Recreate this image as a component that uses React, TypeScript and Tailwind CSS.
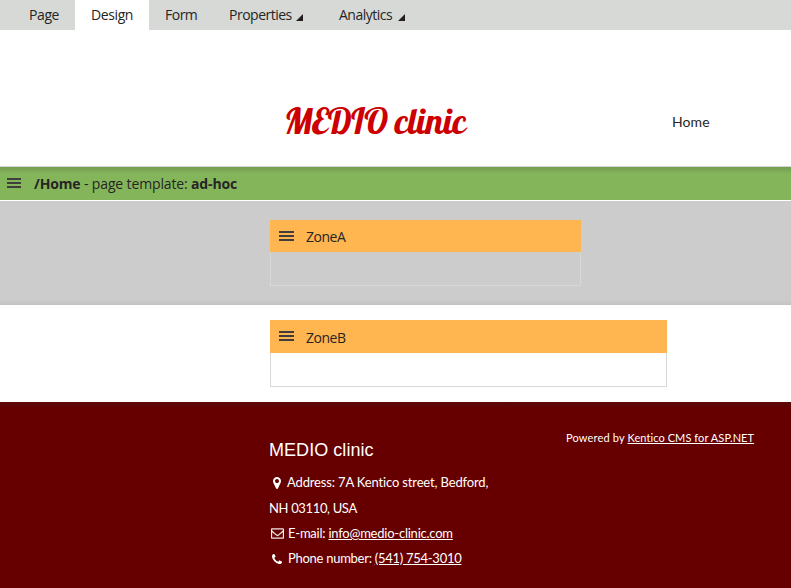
import type { ReactNode } from "react";

const UI = "font-['Open_Sans','Noto_Sans',sans-serif]";

function Caret() {
  return (
    <svg className="ml-[5px] mt-[4px] h-[7px] w-[7px]" viewBox="0 0 7 7">
      <path d="M7 0V7H0Z" fill="#231f20" />
    </svg>
  );
}

function MenuIcon({ className = "" }: { className?: string }) {
  return (
    <svg className={`shrink-0 ${className}`} width="15" height="10" viewBox="0 0 15 10" preserveAspectRatio="none" shapeRendering="crispEdges" fill="#403e3d">
      <rect width="15" height="2" />
      <rect y="4" width="15" height="2" />
      <rect y="8" width="15" height="2" />
    </svg>
  );
}

function Zone({ name, width, head, labelTop }: { name: string; width: string; head: string; labelTop: string }) {
  return (
    <div className={`ml-[270px] ${width}`}>
      <div className={`flex items-start bg-[#ffb550] pl-[9px] ${head}`}>
        <MenuIcon className="mt-[11px]" />
        <span className={`ml-[12px] text-[14px] leading-[18px] tracking-[-0.5px] ${labelTop}`}>{name}</span>
      </div>
      <div className="h-[34px] border border-t-0 border-[#d6d9d6]" />
    </div>
  );
}

function ContactIcon({ children, viewBox, className }: { children: ReactNode; viewBox: string; className: string }) {
  return (
    <svg className={`shrink-0 ${className}`} viewBox={viewBox} fill="currentColor">
      {children}
    </svg>
  );
}

export default function App() {
  return (
    <div className={`h-[588px] w-[791px] overflow-hidden bg-white text-[#262524] ${UI}`}>
      <nav className="flex h-[30px] bg-[#d6d9d6] text-[14px] leading-[30px] tracking-[-0.5px]">
        <div className="w-[75px] pl-[29px] tracking-[-0.4px]">Page</div>
        <div className="w-[74px] bg-white pl-[16px] tracking-[-0.4px]">Design</div>
        <div className="w-[80px] pl-[16px]">Form</div>
        <div className="flex w-[110px] items-center">
          <span className="w-[62px]">Properties</span>
          <Caret />
        </div>
        <div className="flex items-center">
          <span className="w-[54px]">Analytics</span>
          <Caret />
        </div>
      </nav>

      <header className="flex h-[136px] items-start">
        <h1 className="ml-[284px] mt-[66px] w-[196px] whitespace-nowrap font-['Lobster',cursive] text-[36px] font-normal leading-[50px] tracking-[-0.55px] text-[#cc0000]">MEDIO clinic</h1>
        <a className="ml-[192px] mt-[82px] font-['Lato',sans-serif] text-[14px] leading-[20px] tracking-[0.1px]">Home</a>
      </header>

      <div className="flex h-[35px] items-start border-b border-t border-b-white border-t-[#d5d5dc] bg-[#84b55b] bg-[linear-gradient(#739d50,#84b55b_7px)] pl-[7px]">
        <MenuIcon className="mt-[11px] w-[14px]" />
        <div className="ml-[13px] mt-[8px] whitespace-pre text-[14px] leading-[18px] tracking-[-0.14px]">
          <b>/Home</b> - page template: <b>ad-hoc</b>
        </div>
      </div>

      <section className="h-[104px] bg-[#cccccc] bg-[linear-gradient(#cccccc_99px,#c3c3c3)] pt-[19px]">
        <Zone name="ZoneA" width="w-[311px]" head="h-[32px]" labelTop="mt-[8px]" />
      </section>
      <section className="h-[97px] pt-[15px]">
        <Zone name="ZoneB" width="w-[397px]" head="h-[33px]" labelTop="mt-[9px]" />
      </section>

      <footer className="flex h-[186px] items-start bg-[#660000] bg-[linear-gradient(#5c0808,#660000_8px)] pl-[269px] font-['Lato',sans-serif] text-[13px] text-white">
        <div className="w-[297px] pt-[36px] tracking-[-0.27px]">
          <h2 className="font-['Liberation_Sans',Arial,sans-serif] text-[18px] leading-[24px] tracking-[0.05px]">MEDIO clinic</h2>
          <div className="mt-[8px] flex h-[25px] items-center">
            <ContactIcon viewBox="0 128 1024 1536" className="ml-[4px] mr-[6px] h-[12px] w-[8px]">
              <path d="M768 640q0-106-75-181t-181-75-181 75-75 181 75 181 181 75 181-75 75-181zm256 0q0 109-33 179l-364 774q-16 33-47.500 52t-67.500 19-67.500-19-46.500-52l-365-774q-33-70-33-179 0-212 150-362t362-150 362 150 150 362z" />
            </ContactIcon>
            <span className="tracking-[-0.15px]">Address: 7A Kentico street, Bedford,</span>
          </div>
          <div className="h-[26px] leading-[26px] tracking-[-0.35px]">NH 03110, USA</div>
          <div className="flex h-[25px] items-center">
            <ContactIcon viewBox="0 256 1792 1408" className="ml-[2px] mr-[4px] h-[11px] w-[13px]">
              <path stroke="currentColor" strokeWidth="50" d="M1664 1504v-768q-32 36-69 66-268 206-426 338-51 43-83 67t-86.500 48.500-102.500 24.500h-2q-48 0-102.500-24.500t-86.500-48.500-83-67q-158-132-426-338-37-30-69-66v768q0 13 9.500 22.500t22.500 9.500h1472q13 0 22.500-9.500t9.500-22.500zm0-1051v-24.500l-.5-13-3-12.500-5.500-9-9-7.500-14-2.500h-1472q-13 0-22.500 9.500t-9.500 22.500q0 168 147 284 193 152 401 317 6 5 35 29.500t46 37.500 44.500 31.500 50.500 27.500 43 9h2q20 0 43-9t50.500-27.500 44.500-31.500 46-37.500 35-29.500q208-165 401-317 54-43 100.500-115.500t46.500-131.500zm128-37v1088q0 66-47 113t-113 47h-1472q-66 0-113-47t-47-113v-1088q0-66 47-113t113-47h1472q66 0 113 47t47 113z" />
            </ContactIcon>
            <span className="tracking-[-0.23px]">E-mail: <a className="underline">info@medio-clinic.com</a></span>
          </div>
          <div className="flex h-[25px] items-center">
            <ContactIcon viewBox="0 128 1408 1408" className="ml-[3px] mr-[6px] h-[10px] w-[10px]">
              <path d="M1408 1240q0 27-10 70.500t-21 68.500q-21 50-122 106-94 51-186 51-27 0-53-3.500t-57.500-12.500-47-14.500-55.500-20.500-49-18q-98-35-175-83-127-79-264-216t-216-264q-48-77-83-175-3-9-18-49t-20.500-55.500-14.500-47-12.500-57.500-3.500-53q0-92 51-186 56-101 106-122 25-11 68.500-21t70.500-10q14 0 21 3 18 6 53 76 11 19 30 54t35 63.500 31 53.500q3 4 17.500 25t21.500 35.500 7 28.500q0 20-28.500 50t-62 55-62 53-28.500 46q0 9 5 22.500t8.500 20.500 14 24 11.500 19q76 137 174 235t235 174q2 1 19 11.500t24 14 20.500 8.500 22.500 5q18 0 46-28.500t53-62 55-62 50-28.500q14 0 28.500 7t35.500 21.500 25 17.500q25 15 53.500 31t63.500 35 54 30q70 35 76 53 3 7 3 21z" />
            </ContactIcon>
            <span>Phone number: <a className="underline">(541) 754-3010</a></span>
          </div>
        </div>
        <div className="mt-[28px] whitespace-nowrap text-[11px] leading-[16px]">
          <span className="tracking-[0.17px]">Powered by </span>
          <a className="tracking-[0.08px] underline">Kentico CMS for ASP.NET</a>
        </div>
      </footer>
    </div>
  );
}
